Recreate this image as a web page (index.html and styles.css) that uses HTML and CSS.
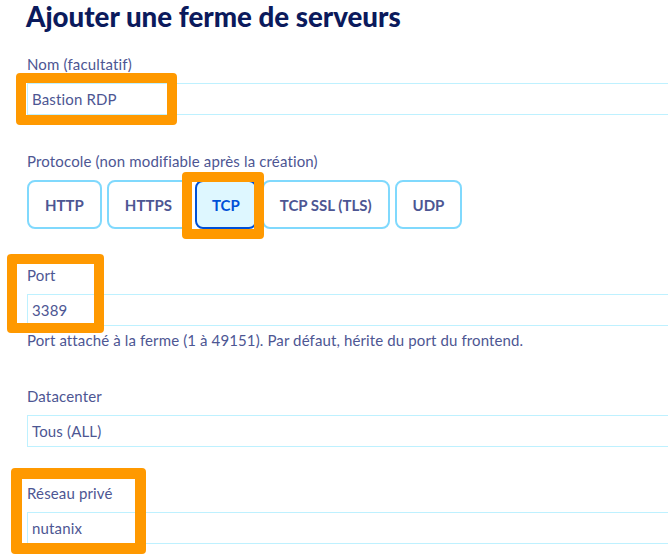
FILE: index.html
```html
<!DOCTYPE html>
<html lang="fr">
<head>
<meta charset="utf-8">
<title>Ajouter une ferme de serveurs</title>
<link rel="stylesheet" href="styles.css">
</head>
<body>
<main class="page">
  <h1 class="title">Ajouter une ferme de serveurs</h1>

  <div class="field">
    <label class="label">Nom (facultatif)</label>
    <div class="input">Bastion RDP</div>
  </div>

  <div class="field">
    <label class="label">Protocole (non modifiable après la création)</label>
    <div class="choices">
      <button class="choice">HTTP</button>
      <button class="choice">HTTPS</button>
      <button class="choice choice-active">TCP</button>
      <button class="choice">TCP SSL (TLS)</button>
      <button class="choice">UDP</button>
    </div>
  </div>

  <div class="field">
    <label class="label">Port</label>
    <div class="input">3389</div>
    <p class="help">Port attaché à la ferme (1 à 49151). Par défaut, hérite du port du frontend.</p>
  </div>

  <div class="field">
    <label class="label">Datacenter</label>
    <div class="input">Tous (ALL)</div>
  </div>

  <div class="field">
    <label class="label">Réseau privé</label>
    <div class="input">nutanix</div>
  </div>

  <div class="mark mark-nom"></div>
  <div class="mark mark-tcp"></div>
  <div class="mark mark-port"></div>
  <div class="mark mark-reseau"></div>
</main>
</body>
</html>
```

FILE: styles.css
```css
html, body {
  margin: 0;
  padding: 0;
  background: #ffffff;
  overflow: hidden;
}

body {
  font-family: Lato, "Open Sans", sans-serif;
  color: #4d5693;
}

.page {
  position: relative;
  box-sizing: border-box;
  padding: 1px 0 0 27px;
  width: 668px;
  height: 560px;
  overflow: hidden;
}

.title {
  margin: 0 0 21px -1px;
  font-size: 27.7px;
  line-height: 32px;
  font-weight: 900;
  color: #0b1a5c;
  white-space: nowrap;
}

.field {
  margin-bottom: 36px;
}

.label {
  display: block;
  font-size: 15px;
  line-height: 20px;
  letter-spacing: 0.15px;
  margin-bottom: 9px;
  color: #4d5693;
}

.input {
  box-sizing: border-box;
  width: 700px;
  height: 32px;
  border: 1px solid #bef1ff;
  padding: 0 4px;
  font-size: 15px;
  line-height: 30px;
  letter-spacing: 0.15px;
  color: #4d5693;
}

.help {
  margin: 4px 0 0;
  font-size: 15px;
  line-height: 20px;
  letter-spacing: 0.12px;
  color: #4d5693;
  white-space: nowrap;
}

.choices {
  display: flex;
  gap: 5px;
}

.choice {
  box-sizing: border-box;
  height: 49px;
  padding: 0 16px;
  border: 2px solid #80d9fd;
  border-radius: 8px;
  background: #ffffff;
  font-family: Lato, "Open Sans", sans-serif;
  font-size: 15px;
  font-weight: 700;
  color: #4d5693;
}

.choice-active {
  padding: 0 15px;
  border-color: #0050d7;
  background: #def7ff;
  color: #0050d7;
}

.mark {
  position: absolute;
  box-sizing: border-box;
  border: 10px solid #ff9900;
  border-radius: 4px;
}

.mark-nom {
  left: 16px;
  top: 73px;
  width: 161px;
  height: 52px;
}

.mark-tcp {
  left: 182px;
  top: 172px;
  width: 82px;
  height: 67px;
}

.mark-port {
  left: 7px;
  top: 254px;
  width: 97px;
  height: 79px;
}

.mark-reseau {
  left: 11px;
  top: 468px;
  width: 135px;
  height: 86px;
  border-width: 11px;
}
```
